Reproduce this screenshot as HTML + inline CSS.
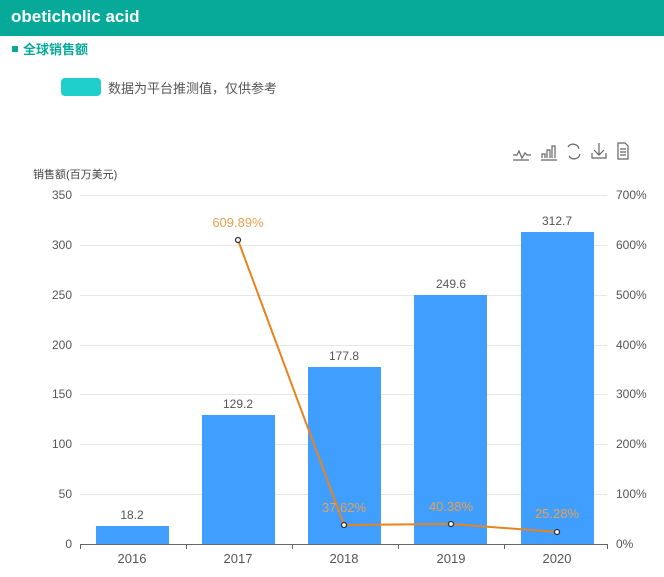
<!DOCTYPE html><html><head><meta charset="utf-8"><style>
body{margin:0;width:664px;height:577px;background:#fff;font-family:"Liberation Sans","Noto Sans CJK SC",sans-serif;overflow:hidden;position:relative}
.hd{position:absolute;left:0;top:0;width:664px;height:36px;background:#07a998;color:#fff;font-weight:bold;font-size:17px;line-height:33px;padding-left:11px;box-sizing:border-box}
.t{position:absolute;left:12px;top:39px;color:#07a998;font-weight:bold;font-size:13px}
.t i{display:inline-block;width:6px;height:6px;background:#07a998;margin-right:5px;vertical-align:2px}
.lg{position:absolute;left:61px;top:78px;width:40px;height:18px;border-radius:4px;background:#1ecfcb}
.lt{position:absolute;left:108px;top:78px;font-size:13px;color:#555}
</style></head><body>
<div class="hd">obeticholic acid</div>
<div class="t"><i></i>全球销售额</div>
<div class="lg"></div><div class="lt">数据为平台推测值，仅供参考</div>
<svg width="664" height="577" style="position:absolute;left:0;top:0" font-family="Liberation Sans, sans-serif">
<g stroke="#666" fill="none" stroke-width="1.2">
<path d="M513 155h4l2-4 3 7 3-5 2 2h4M513 160h16"/>
<path d="M542 158v-4h3v4M547 158v-8h3v8M552 158v-12h3v12M541 160h16"/>
<path d="M568 147a6 6 0 0 1 11 2M580 154a6 6 0 0 1-11 2"/>
<path d="M599 143v11M594 150l5 5 5-5M592 153v5h14v-5"/>
<path d="M618 143h7l3 3v13h-10zM620 149h6M620 152h6M620 155h6"/>
</g>
<text x="33" y="178" font-size="11" fill="#444" font-family="Liberation Sans, Noto Sans CJK SC, sans-serif">销售额(百万美元)</text>
<g stroke="#e6e6e6"><path d="M80 195.5h527M80 245.5h527M80 295.5h527M80 345.5h527M80 394.5h527M80 444.5h527M80 494.5h527"/></g>
<path d="M80 544.5h527" stroke="#666"/>
<g stroke="#666"><path d="M80.5 544v5M186.5 544v5M292.5 544v5M398.5 544v5M504.5 544v5M607.5 544v5"/></g>
<g font-size="12" fill="#555" text-anchor="end">
<text x="72" y="199">350</text><text x="72" y="249">300</text><text x="72" y="299">250</text><text x="72" y="349">200</text><text x="72" y="398">150</text><text x="72" y="448">100</text><text x="72" y="498">50</text><text x="72" y="548">0</text></g>
<g font-size="12" fill="#555">
<text x="616" y="199">700%</text><text x="616" y="249">600%</text><text x="616" y="299">500%</text><text x="616" y="349">400%</text><text x="616" y="398">300%</text><text x="616" y="448">200%</text><text x="616" y="498">100%</text><text x="616" y="548">0%</text></g>
<g font-size="13" fill="#555" text-anchor="middle">
<text x="132" y="563">2016</text><text x="238" y="563">2017</text><text x="344" y="563">2018</text><text x="451" y="563">2019</text><text x="557" y="563">2020</text></g>
<g fill="#409eff">
<rect x="96" y="526" width="73" height="18"/><rect x="202" y="415" width="73" height="129"/><rect x="308" y="367" width="73" height="177"/><rect x="414" y="295" width="73" height="249"/><rect x="521" y="232" width="73" height="312"/></g>
<g font-size="12" fill="#555" text-anchor="middle">
<text x="132" y="519">18.2</text><text x="238" y="408">129.2</text><text x="344" y="360">177.8</text><text x="451" y="288">249.6</text><text x="557" y="225">312.7</text></g>
<polyline points="238,240 344,525 451,524 557,532" fill="none" stroke="#e8831f" stroke-width="2"/>
<g fill="#fff" stroke="#333" stroke-width="1.3"><circle cx="238" cy="240" r="2.5"/><circle cx="344" cy="525" r="2.5"/><circle cx="451" cy="524" r="2.5"/><circle cx="557" cy="532" r="2.5"/></g>
<g font-size="13" fill="#e8a050" text-anchor="middle">
<text x="238" y="227">609.89%</text><text x="344" y="512">37.62%</text><text x="451" y="511">40.38%</text><text x="557" y="518">25.28%</text></g>
</svg>
</body></html>
